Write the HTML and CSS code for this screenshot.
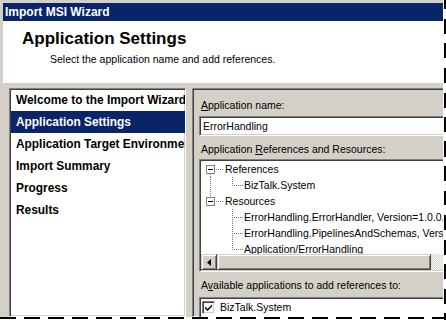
FILE: index.html
```html
<!DOCTYPE html>
<html lang="en">
<head>
    <meta charset="UTF-8">
    <meta name="viewport" content="width=device-width, initial-scale=1.0">
    <title>Import MSI Wizard</title>
    <link rel="stylesheet" href="styles.css">
</head>
<body>
    <div class="frame">
        <div class="window">
            <div class="titlebar">Import MSI Wizard</div>

            <div class="header">
                <h1 class="header-title">Application Settings</h1>
                <p class="header-desc">Select the application name and add references.</p>
            </div>

            <div class="content">
                <!-- 向导步骤列表 -->
                <ul class="steps">
                    <li>Welcome to the Import Wizard</li>
                    <li class="active">Application Settings</li>
                    <li>Application Target Environment</li>
                    <li>Import Summary</li>
                    <li>Progress</li>
                    <li>Results</li>
                </ul>

                <div class="settings">
                    <label class="field-label"><u>A</u>pplication name:</label>
                    <div class="textbox">ErrorHandling</div>

                    <label class="field-label field-gap">Application <u>R</u>eferences and Resources:</label>
                    <div class="tree">
                        <div class="tree-rows">
                            <div class="tree-row">
                                <svg class="gutter" width="24" height="16">
                                    <rect x="5.5" y="4.5" width="8" height="8" fill="#fff" stroke="#808080"/>
                                    <path d="M7 8.5h5" stroke="#000"/>
                                    <path d="M15 8.5h8M9.5 13v3" stroke="#808080" stroke-dasharray="1 1"/>
                                </svg>
                                <span>References</span>
                            </div>
                            <div class="tree-row">
                                <svg class="gutter" width="43" height="16">
                                    <path d="M9.5 0v16M31.5 0v9M33 8.5h9" stroke="#808080" stroke-dasharray="1 1"/>
                                </svg>
                                <span>BizTalk.System</span>
                            </div>
                            <div class="tree-row">
                                <svg class="gutter" width="24" height="16">
                                    <path d="M9.5 0v4" stroke="#808080" stroke-dasharray="1 1"/>
                                    <rect x="5.5" y="4.5" width="8" height="8" fill="#fff" stroke="#808080"/>
                                    <path d="M7 8.5h5" stroke="#000"/>
                                    <path d="M15 8.5h8" stroke="#808080" stroke-dasharray="1 1"/>
                                </svg>
                                <span>Resources</span>
                            </div>
                            <div class="tree-row">
                                <svg class="gutter" width="43" height="16">
                                    <path d="M31.5 0v16M33 8.5h9" stroke="#808080" stroke-dasharray="1 1"/>
                                </svg>
                                <span>ErrorHandling.ErrorHandler, Version=1.0.0.0, Culture=neutral</span>
                            </div>
                            <div class="tree-row">
                                <svg class="gutter" width="43" height="16">
                                    <path d="M31.5 0v16M33 8.5h9" stroke="#808080" stroke-dasharray="1 1"/>
                                </svg>
                                <span>ErrorHandling.PipelinesAndSchemas, Version=1.0.0.0</span>
                            </div>
                            <div class="tree-row">
                                <svg class="gutter" width="43" height="16">
                                    <path d="M31.5 0v9M33 8.5h9" stroke="#808080" stroke-dasharray="1 1"/>
                                </svg>
                                <span>Application/ErrorHandling</span>
                            </div>
                        </div>

                        <!-- 水平滚动条 -->
                        <div class="hscroll">
                            <div class="scroll-btn">
                                <svg width="4" height="7"><path d="M4 0v7L0 3.5z" fill="#000"/></svg>
                            </div>
                            <div class="scroll-thumb"></div>
                            <div class="scroll-track"></div>
                        </div>
                    </div>

                    <label class="field-label field-gap">A<u>v</u>ailable applications to add references to:</label>
                    <div class="checklist">
                        <div class="check-row">
                            <span class="checkbox">
                                <svg width="7" height="7"><path d="M0 2.5l2.5 2.5 4.5-4.5v2l-4.5 4.5-2.5-2.5z" fill="#000"/></svg>
                            </span>
                            <span>BizTalk.System</span>
                        </div>
                    </div>
                </div>
            </div>
        </div>
    </div>
</body>
</html>
```

FILE: styles.css
```css
* {
    box-sizing: border-box;
}

body {
    margin: 0;
    background-color: #fff;
    font-family: 'Liberation Sans', Arial, sans-serif;
    font-size: 10.5px;
    color: #000;
}

/* 截图外框的虚线 */
.frame {
    width: 446px;
    height: 320px;
    background:
        repeating-linear-gradient(90deg, #000 0 16px, transparent 16px 24px) 0 317px / 446px 2px no-repeat,
        repeating-linear-gradient(180deg, #000 0 9.5px, transparent 9.5px 19px, #000 19px 24.5px) 444px 0 / 2px 320px no-repeat,
        #fff;
}

.window {
    display: flex;
    flex-direction: column;
    width: 443px;
    height: 317px;
    padding: 3px 0 0 3px;
    background-color: #d4d0c8;
    overflow: hidden;
}

.titlebar {
    height: 18px;
    line-height: 18px;
    padding-left: 2px;
    background-color: #0a246a;
    color: #fff;
    font-size: 12px;
    font-weight: bold;
    flex-shrink: 0;
}

.header {
    height: 62px;
    padding: 8px 0 0 19px;
    background-color: #fff;
    flex-shrink: 0;
}

.header-title {
    margin: 0;
    font-size: 17px;
    line-height: 20px;
    font-weight: bold;
}

.header-desc {
    margin: 4px 0 0 28px;
    line-height: 13px;
}

.content {
    display: flex;
    gap: 6px;
    flex: 1;
    min-height: 0;
    padding: 5px 0 0 6px;
}

/* 凹陷边框 */
.steps,
.settings,
.textbox,
.tree,
.checklist {
    border: 1px solid;
    border-color: #808080 #fff #fff #808080;
    box-shadow: inset 1px 1px #404040, inset -1px -1px #d4d0c8;
}

.steps {
    width: 177px;
    margin: 0;
    padding: 0 0 0 1px;
    list-style: none;
    background-color: #fff;
    flex-shrink: 0;
    overflow: hidden;
}

.steps li {
    height: 22px;
    line-height: 22px;
    padding-left: 5px;
    font-size: 11.9px;
    font-weight: bold;
    white-space: nowrap;
    overflow: hidden;
}

.steps li.active {
    background-color: #0a246a;
    color: #fff;
}

.settings {
    width: 300px;
    padding: 10px 0 0 6px;
    flex-shrink: 0;
}

.field-label {
    display: block;
    line-height: 13px;
    padding-left: 2px;
    margin-bottom: 4px;
    white-space: nowrap;
}

.field-gap {
    margin-top: 7px;
    margin-bottom: 3px;
}

.field-gap:last-of-type {
    margin-bottom: 5px;
}

.textbox {
    height: 20px;
    line-height: 18px;
    padding-left: 3px;
    background-color: #fff;
}

.tree {
    display: flex;
    flex-direction: column;
    height: 113px;
    padding: 1px;
    background-color: #fff;
}

.tree-rows {
    flex: 1;
    min-height: 0;
    overflow: hidden;
}

.tree-row {
    display: flex;
    align-items: center;
    height: 16px;
    line-height: 16px;
    white-space: nowrap;
}

.gutter {
    display: block;
    flex-shrink: 0;
}

.hscroll {
    display: flex;
    height: 16px;
    flex-shrink: 0;
}

/* 凸起按钮 */
.scroll-btn,
.scroll-thumb {
    border: 1px solid;
    border-color: #d4d0c8 #404040 #404040 #d4d0c8;
    box-shadow: inset 1px 1px #fff, inset -1px -1px #808080;
    background-color: #d4d0c8;
}

.scroll-btn {
    display: flex;
    align-items: center;
    justify-content: center;
    width: 16px;
    flex-shrink: 0;
}

.scroll-btn svg {
    margin-left: -1px;
}

.scroll-thumb {
    width: 214px;
    flex-shrink: 0;
}

.scroll-track {
    flex: 1;
    background: repeating-conic-gradient(#fff 0 25%, #d4d0c8 0 50%) 0 0 / 2px 2px;
}

.checklist {
    height: 40px;
    padding: 3px 0 0 2px;
    background-color: #fff;
}

.check-row {
    display: flex;
    align-items: center;
    gap: 5px;
    line-height: 13px;
}

.checkbox {
    display: flex;
    align-items: center;
    justify-content: center;
    width: 13px;
    height: 13px;
    border: 1px solid;
    border-color: #808080 #fff #fff #808080;
    box-shadow: inset 1px 1px #404040, inset -1px -1px #d4d0c8;
    background-color: #fff;
}
```
